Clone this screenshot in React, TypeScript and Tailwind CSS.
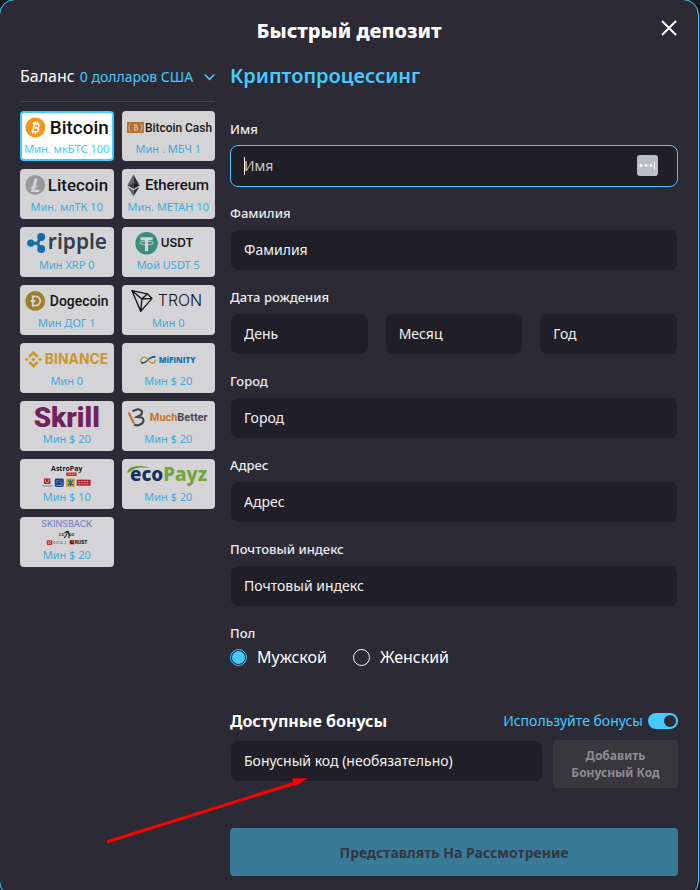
import React, { useState } from 'react';

function BitcoinLogo() {
  return (
    <>
      <circle cx="13.5" cy="14.5" r="10" fill="#f7931a" />
      <g transform="rotate(13 13.5 14.5)" fill="none" stroke="#fff" strokeWidth="1.7">
        <path d="M10 10.5h4.5a2 2 0 0 1 0 4H11.5M11.5 14.5h3.5a2.1 2.1 0 0 1 0 4.2H10M11.7 10.5v8.2" />
        <path d="M12.2 8.3v2M14.6 8.3v2M12.2 19v2M14.6 19v2" strokeWidth="1.3" />
      </g>
      <text x="28" y="21" fontFamily="Roboto, sans-serif" fontSize="19" fontWeight="500" fill="#111">Bitcoin</text>
    </>
  );
}

function BitcoinCashLogo() {
  return (
    <>
      <rect x="3" y="9" width="17" height="11" fill="#d9822b" />
      <g fill="none" stroke="#f5e3cf" strokeWidth="1">
        <path d="M6.5 10.5Q3 14.5 6.5 18.5M16.5 10.5Q20 14.5 16.5 18.5" />
        <path d="M10 12h2a1.2 1.2 0 0 1 0 2.5h-1h1.5a1.2 1.2 0 0 1 0 2.5H10M10.8 11v7" strokeWidth="1.2" />
      </g>
      <text x="21" y="19" fontFamily="Roboto, sans-serif" fontSize="12" fontWeight="500" fill="#111">Bitcoin Cash</text>
    </>
  );
}

function LitecoinLogo() {
  return (
    <>
      <circle cx="13.3" cy="14" r="10" fill="#b5b5b5" />
      <path d="M12.6 7.5h3.2l-2 7.5 1.8-.7-.5 1.8-1.8.7-.6 2h5l-.6 2.2H9l1-3.6-1.5.6.5-1.8 1.5-.6z" fill="#fff" />
      <text x="26" y="20" fontFamily="Roboto, sans-serif" fontSize="17" fontWeight="500" fill="#111">Litecoin</text>
    </>
  );
}

function EthereumLogo() {
  return (
    <>
      <path d="M9.5 3.5 3.3 14.3l6.2-2.9z" fill="#777" />
      <path d="M9.5 3.5v7.9l6.2 2.9z" fill="#343434" />
      <path d="m3.3 14.3 6.2-2.9V18z" fill="#444" />
      <path d="m15.7 14.3-6.2-2.9V18z" fill="#141414" />
      <path d="m3.3 15.7 6.2 3.7v5.8z" fill="#777" />
      <path d="m15.7 15.7-6.2 3.7v5.8z" fill="#343434" />
      <text x="21" y="19" fontFamily="Roboto, sans-serif" fontSize="15" fontWeight="500" fill="#111">Ethereum</text>
    </>
  );
}

function RippleLogo() {
  return (
    <>
      <g fill="#0f7dc7">
        <circle cx="8.8" cy="14.2" r="3.6" />
        <circle cx="19.3" cy="8" r="4" />
        <circle cx="19.3" cy="20" r="4" />
      </g>
      <path d="M9 14.2h5.2q2 0 3-3l1.4-3M14.2 14.2q2 0 3 3l1.4 3" fill="none" stroke="#0f7dc7" strokeWidth="3" />
      <text x="26" y="20" fontFamily="Noto Sans, sans-serif" fontSize="21" fontWeight="600" fill="#36454f">ripple</text>
    </>
  );
}

function UsdtLogo() {
  return (
    <>
      <circle cx="22.7" cy="14.3" r="11.3" fill="#3fa88c" />
      <path d="M16.6 8.2h12.2v3h-4.5v11h-3.2v-11h-4.5z" fill="#fff" />
      <ellipse cx="22.7" cy="14" rx="7" ry="1.8" fill="none" stroke="#fff" strokeWidth="0.9" />
      <text x="37" y="18" fontFamily="Inter, sans-serif" fontSize="12" fontWeight="600" fill="#111">USDT</text>
    </>
  );
}

function DogecoinLogo() {
  return (
    <>
      <circle cx="13.3" cy="14" r="10" fill="#b49226" />
      <circle cx="13.3" cy="14" r="8.3" fill="none" stroke="#c8a83c" strokeWidth="0.8" />
      <path d="M10.8 9.3h2.8a4.6 4.6 0 0 1 0 9.4h-2.8zM8.6 14h5" fill="none" stroke="#fff" strokeWidth="1.9" />
      <text x="28" y="19" fontFamily="Roboto, sans-serif" fontSize="14" fontWeight="500" fill="#111">Dogecoin</text>
    </>
  );
}

function TronLogo() {
  return (
    <>
      <path
        d="M8 3.6 23.5 6.8 28.2 11.4 16.8 24.4zM8 3.6l10 8.4 5.5-5.2M18 12l10.2-.6M18 12l-1.2 12.4"
        fill="none"
        stroke="#111"
        strokeWidth="1.4"
        strokeLinejoin="round"
      />
      <text x="34" y="19" fontFamily="Inter, sans-serif" fontSize="16" fontWeight="300" fill="#111">TRON</text>
    </>
  );
}

function BinanceLogo() {
  return (
    <>
      <g fill="#f0b429">
        <path d="m11.5 5.7 5.2 5.2-1.9 1.9-3.3-3.3-3.3 3.3-1.9-1.9z" />
        <path d="m11.5 23.1 5.2-5.2-1.9-1.9-3.3 3.3L8.2 16l-1.9 1.9z" />
        <path d="m3 14.4 1.9-1.9 1.9 1.9-1.9 1.9zM16.2 14.4l1.9-1.9 1.9 1.9-1.9 1.9zM9.5 14.4l2-2 2 2-2 2z" />
      </g>
      <text x="23" y="19" fontFamily="Inter, sans-serif" fontSize="14" fontWeight="700" fill="#f0b429">BINANCE</text>
    </>
  );
}

function MifinityLogo() {
  return (
    <>
      <path d="M31.5 11.8q-4-.5-7.5 3.2t-7 2.8" fill="none" stroke="#0e89c4" strokeWidth="1.7" />
      <path d="M17 16.5q-.5-3.5 3-4.3 2.5-.3 4.5 2.5" fill="none" stroke="#e3a12b" strokeWidth="1.3" />
      <path d="M24 15q2.5 3.8 5.3 3.2 2.5-.8 2-3.5" fill="none" stroke="#e3a12b" strokeWidth="1.3" />
      <path d="M17 16.5q1 2.5 5 .5M26 13.5q3-2 5.5-1.5" fill="none" stroke="#1a3d6d" strokeWidth="1" />
      <text x="35" y="18" fontFamily="Open Sans, sans-serif" fontSize="8" fontWeight="800" fill="#0e89c4">MiFINITY</text>
    </>
  );
}

function SkrillLogo() {
  return <text x="45" y="24" textAnchor="middle" fontFamily="Roboto, sans-serif" fontSize="28" fontWeight="900" fill="#862165">Skrill</text>;
}

function MuchBetterLogo() {
  return (
    <>
      <path d="m4.5 9.5 5.5 11" stroke="#e8871e" strokeWidth="2.2" fill="none" />
      <path d="M8.5 8.5Q12 5.5 15.5 6.5 19.5 8 17.5 11.5L13 14l5 .5q3.5 3-.5 6.5-3.5 2.5-7.5.5" stroke="#4c4f54" strokeWidth="2.2" fill="none" />
      <text x="26" y="18" fontFamily="Roboto, sans-serif" fontSize="11" fontWeight="700" fill="#e8871e">
        Much<tspan fill="#4c4f54">Better</tspan>
      </text>
    </>
  );
}

function AstroPayLogo() {
  return (
    <>
      <text x="45" y="10" textAnchor="middle" fontFamily="Open Sans, sans-serif" fontSize="7" fontWeight="700" fill="#111">AstroPay</text>
      <rect x="44.5" y="11.5" width="10.5" height="3.5" rx="0.5" fill="#f0262b" />
      <path d="M46.5 13.2h6.5" stroke="#fff" strokeWidth="0.9" strokeDasharray="1.3 .6" />
      <rect x="22" y="17.5" width="6.5" height="5.5" fill="#bb2334" />
      <path d="M23.5 18.5v2l1.7 1.5 1.7-1.5v-2" stroke="#fff" strokeWidth="0.8" fill="none" />
      <path d="M20.5 25h10" stroke="#777" strokeWidth="1" strokeDasharray="1.4 .4" />
      <rect x="33" y="17.5" width="9" height="8.5" rx="1.5" fill="#16489b" />
      <path d="M35 22.5v-3h2.5M39 19.5v3h2" stroke="#6d93c9" strokeWidth="1" fill="none" />
      <path d="M34.5 24.5h6.5" stroke="#e8c628" strokeWidth="0.9" />
      <rect x="44.5" y="17.5" width="8.5" height="8.5" fill="#edc32c" />
      <path d="m46 19.5 5.5 5M51.5 19.5l-5.5 5M48.7 18.5v6.5" stroke="#26709b" strokeWidth="1.1" />
      <rect x="55" y="18.7" width="14" height="6" fill="#c9202c" />
      <path d="M56.5 20.5h11M56.5 22.7h11" stroke="#fff" strokeWidth="0.7" strokeDasharray="2 .7" />
    </>
  );
}

function EcoPayzLogo() {
  return (
    <>
      <path d="M3.5 12.5Q2.5 6.5 12 5.3q8-1 14 1.7Q12 5 6 10.5z" fill="#7cb535" />
      <text x="6" y="20" fontFamily="Noto Sans, sans-serif" fontSize="19" fontWeight="800" fill="#0c3268">
        eco<tspan fill="#8cc43c">Payz</tspan>
      </text>
    </>
  );
}

function SkinsbackLogo() {
  return (
    <>
      <text x="45" y="8" textAnchor="middle" fontFamily="Inter, sans-serif" fontSize="9" fontWeight="400" fill="#7d8fee">SKINSBACK</text>
      <text x="37" y="17" fontFamily="Roboto, sans-serif" fontSize="4" fontWeight="700" fill="#333">CS</text>
      <text x="47" y="17" fontFamily="Roboto, sans-serif" fontSize="4" fontWeight="700" fill="#333">GO</text>
      <path d="M44 12.5h2.5v2l1 1.2-.5 3.5M45 15l-1 2-1.5 2M42.5 13.8h5" fill="none" stroke="#111" strokeWidth="1.1" />
      <rect x="25" y="21.3" width="5.5" height="4.7" fill="#d8392b" />
      <path d="m26 22.3 3.5 2.8M29 22l-.5 1M26.5 25l.5-1" stroke="#fff" strokeWidth="0.8" />
      <text x="31" y="25" fontFamily="Roboto, sans-serif" fontSize="4" fill="#777">DOTA 2</text>
      <rect x="48" y="21" width="4.5" height="4.5" fill="#cd3626" />
      <path d="M49 22v2.5h2.5" stroke="#111" strokeWidth="0.8" fill="none" />
      <text x="53" y="25" fontFamily="Roboto, sans-serif" fontSize="5" fontWeight="900" fill="#222">RUST</text>
    </>
  );
}

const methods = [
  { id: 'btc', min: 'Мин. мкБТС 100', logo: <BitcoinLogo /> },
  { id: 'bch', min: 'Мин . МБЧ 1', logo: <BitcoinCashLogo /> },
  { id: 'ltc', min: 'Мин. млТК 10', logo: <LitecoinLogo /> },
  { id: 'eth', min: 'Мин. МЕТАН 10', logo: <EthereumLogo /> },
  { id: 'xrp', min: 'Мин XRP 0', logo: <RippleLogo /> },
  { id: 'usdt', min: 'Мой USDT 5', logo: <UsdtLogo /> },
  { id: 'doge', min: 'Мин ДОГ 1', logo: <DogecoinLogo /> },
  { id: 'trx', min: 'Мин 0', logo: <TronLogo /> },
  { id: 'binance', min: 'Мин 0', logo: <BinanceLogo /> },
  { id: 'mifinity', min: 'Мин $ 20', logo: <MifinityLogo /> },
  { id: 'skrill', min: 'Мин $ 20', logo: <SkrillLogo /> },
  { id: 'muchbetter', min: 'Мин $ 20', logo: <MuchBetterLogo /> },
  { id: 'astropay', min: 'Мин $ 10', logo: <AstroPayLogo /> },
  { id: 'ecopayz', min: 'Мин $ 20', logo: <EcoPayzLogo /> },
  { id: 'skinsback', min: 'Мин $ 20', logo: <SkinsbackLogo /> },
];

const inputClass =
  'block w-full min-w-0 h-[42px] px-[13px] pb-0.5 rounded-lg border border-[#2b2a35] bg-[#201f27] text-sm text-white placeholder:text-[#f0f0f0] outline-none';
const labelClass = 'block text-[13px] leading-5 font-medium text-[#ececee] mb-1.5';
const radioClass =
  'appearance-none size-[17px] rounded-full border border-white p-px bg-clip-content checked:border-[#45cbff] checked:bg-[#45cbff]';

function Field({ id, label }: { id: string; label: string }) {
  return (
    <div>
      <label htmlFor={id} className={labelClass}>{label}</label>
      <input id={id} type="text" placeholder={label} className={inputClass} />
    </div>
  );
}

export default function QuickDeposit() {
  const [method, setMethod] = useState('btc');
  const [gender, setGender] = useState('male');
  const [useBonus, setUseBonus] = useState(true);

  return (
    <div className="h-screen overflow-hidden bg-[#1b1b1f] pr-px font-['Noto_Sans',sans-serif] text-white">
      <div role="dialog" aria-labelledby="title" className="relative -ml-px -mt-px rounded-2xl border border-[#45cbff] bg-[#2b2a35] px-5 pb-5">
        {/* Header */}
        <header className="grid grid-cols-[24px_1fr_24px] items-center pt-4">
          <h1 id="title" className="col-start-2 text-center text-xl leading-[30px] font-extrabold">Быстрый депозит</h1>
          <button type="button" aria-label="Закрыть" className="mb-1.5 justify-self-end">
            <svg width="18" height="18" viewBox="0 0 18 18" fill="none" stroke="#fff" strokeWidth="2">
              <path d="m2 2 14 14M16 2 2 16" />
            </svg>
          </button>
        </header>

        <div className="flex items-start gap-[15px] pt-4">
          {/* Payment methods */}
          <aside className="w-[195px] shrink-0">
            <button type="button" className="flex w-full items-center border-b border-[#464550] pt-0.5 pb-3">
              <span className="text-base leading-[25px]">Баланс</span>
              <span className="ml-[5px] text-sm leading-[25px] text-[#45cbff]">0 долларов США</span>
              <svg className="ml-auto" width="11" height="8" viewBox="0 0 11 8" fill="none" stroke="#45cbff" strokeWidth="1.6">
                <path d="m.7 1.5 4.8 4.8 4.8-4.8" />
              </svg>
            </button>
            <div className="mt-[9px] grid grid-cols-2 gap-2">
              {methods.map((m) => (
                <button
                  key={m.id}
                  type="button"
                  aria-pressed={method === m.id}
                  onClick={() => setMethod(m.id)}
                  className={`flex flex-col items-center rounded border-2 bg-white pb-0.5 ${method === m.id ? 'border-[#45cbff]' : 'border-white opacity-80'}`}
                >
                  <svg className="w-full overflow-visible" height="28" viewBox="0 0 90 28">{m.logo}</svg>
                  <span className="text-[11px] leading-4 whitespace-nowrap text-[#45cbff]">{m.min}</span>
                </button>
              ))}
            </div>
          </aside>

          {/* Form */}
          <form className="min-w-0 flex-1" onSubmit={(e) => e.preventDefault()}>
            <h2 className="text-xl leading-7 font-semibold text-[#45cbff]">Криптопроцессинг</h2>

            <div className="mt-[29px] space-y-4">
              <div>
                <label htmlFor="firstName" className={labelClass}>Имя</label>
                <div className="relative">
                  <input
                    id="firstName"
                    type="text"
                    placeholder="Имя"
                    className="block w-full h-[42px] pl-[13px] pr-12 pb-0.5 rounded-lg border border-[#45cbff] bg-[#201f27] text-sm text-white placeholder:text-[#c8c8ca] outline-none"
                  />
                  <span className="absolute left-3.5 top-3 h-[18px] w-px bg-white" />
                  <svg className="absolute right-5 top-2.5" width="21" height="21" viewBox="0 0 21 21">
                    <rect width="21" height="21" rx="3" fill="#b7c0c9" />
                    <g fill="#fff">
                      <circle cx="4" cy="10.5" r="1.5" />
                      <circle cx="9" cy="10.5" r="1.5" />
                      <circle cx="14" cy="10.5" r="1.5" />
                      <rect x="17" y="6.5" width="1" height="8" />
                    </g>
                  </svg>
                </div>
              </div>

              <Field id="lastName" label="Фамилия" />

              <fieldset>
                <legend className={labelClass}>Дата рождения</legend>
                <div className="grid grid-cols-3 gap-4">
                  <input type="text" aria-label="День" placeholder="День" className={inputClass} />
                  <input type="text" aria-label="Месяц" placeholder="Месяц" className={inputClass} />
                  <input type="text" aria-label="Год" placeholder="Год" className={inputClass} />
                </div>
              </fieldset>

              <Field id="city" label="Город" />
              <Field id="address" label="Адрес" />
              <Field id="zip" label="Почтовый индекс" />

              <fieldset>
                <legend className="text-[13px] leading-5 font-medium text-[#ececee]">Пол</legend>
                <div className="flex items-center gap-[26px]">
                  <label className="flex items-center gap-2.5 text-base leading-7">
                    <input type="radio" name="gender" checked={gender === 'male'} onChange={() => setGender('male')} className={radioClass} />
                    Мужской
                  </label>
                  <label className="flex items-center gap-2.5 text-base leading-7">
                    <input type="radio" name="gender" checked={gender === 'female'} onChange={() => setGender('female')} className={radioClass} />
                    Женский
                  </label>
                </div>
              </fieldset>
            </div>

            {/* Bonuses */}
            <div className="mt-[38px] flex items-center justify-between">
              <h3 className="text-base leading-6 font-bold">Доступные бонусы</h3>
              <label className="flex items-center gap-[5px] text-sm leading-6 text-[#45cbff]">
                Используйте бонусы
                <input
                  type="checkbox"
                  role="switch"
                  checked={useBonus}
                  onChange={(e) => setUseBonus(e.target.checked)}
                  className="flex h-4 w-[30px] appearance-none items-center rounded-full bg-[#6b6b75] p-0.5 before:size-3 before:rounded-full before:bg-[#2b2a35] checked:justify-end checked:bg-[#45cbff]"
                />
              </label>
            </div>
            <div className="mt-[7px] flex items-start gap-2.5">
              <input type="text" aria-label="Бонусный код" placeholder="Бонусный код (необязательно)" className={inputClass} />
              <button type="button" disabled className="h-12 w-[125px] shrink-0 rounded bg-[#37373c] text-xs leading-[17px] font-bold text-[#8d8d91]">
                Добавить<br />Бонусный Код
              </button>
            </div>

            <button type="submit" disabled className="mt-10 h-12 w-full rounded bg-[#387a98] pt-0.5 text-sm font-bold text-[#333640]">
              Представлять На Рассмотрение
            </button>
          </form>
        </div>

        {/* Pointer to the bonus code field */}
        <svg className="pointer-events-none absolute left-[107px] top-[776px]" width="202" height="68" viewBox="0 0 202 68">
          <path d="M1 65.5 190 6.5" stroke="#f00" strokeWidth="3" strokeLinecap="round" />
          <path d="m201 2-16 .5 3 8z" fill="#f00" />
        </svg>
      </div>
    </div>
  );
}
